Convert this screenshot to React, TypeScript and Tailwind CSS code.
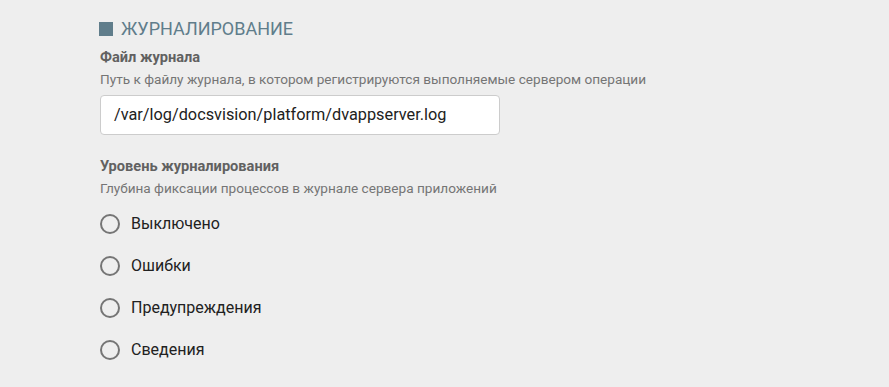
import React from 'react'

const levels = ['Выключено', 'Ошибки', 'Предупреждения', 'Сведения']

const Radio = ({ label }: { label: string }) => (
  <label className="flex items-center h-[42px] cursor-pointer">
    <span className="w-5 h-5 rounded-full border-2 border-[#757575] box-border" />
    <span className="ml-[11px] text-[16px] text-[#212121]">{label}</span>
  </label>
)

export default function App() {
  return (
    <div className="w-[889px] h-[387px] bg-[#eeeeee] overflow-hidden" style={{ fontFamily: 'Roboto, "Noto Sans", sans-serif' }}>
      <div className="pl-[99px] pt-[18px]">
        {/* Section header */}
        <div className="flex items-center h-[22px]">
          <span className="w-[14px] h-[14px] bg-[#607d8b]" />
          <span className="ml-2 text-[18px] text-[#607d8b] leading-[22px]">ЖУРНАЛИРОВАНИЕ</span>
        </div>

        {/* Log file */}
        <div className="pl-px mt-[7px]">
          <div className="text-[14.6px] font-bold text-[#616161] leading-5">Файл журнала</div>
          <div className="mt-[3px] text-[13.6px] text-[#757575] leading-[18px]">
            Путь к файлу журнала, в котором регистрируются выполняемые сервером операции
          </div>
          <div className="mt-[7px] w-[400px] h-10 bg-white border border-[#cccccc] rounded flex items-center px-[13px] text-[16.3px] text-[#212121]">
            /var/log/docsvision/platform/dvappserver.log
          </div>
        </div>

        {/* Log level */}
        <div className="pl-px mt-[21px]">
          <div className="text-[14.6px] font-bold text-[#616161] leading-5">Уровень журналирования</div>
          <div className="mt-[3px] text-[13.6px] text-[#757575] leading-[18px]">
            Глубина фиксации процессов в журнале сервера приложений
          </div>
          <div className="mt-[6px]">
            {levels.map(l => (
              <Radio key={l} label={l} />
            ))}
          </div>
        </div>
      </div>
    </div>
  )
}
